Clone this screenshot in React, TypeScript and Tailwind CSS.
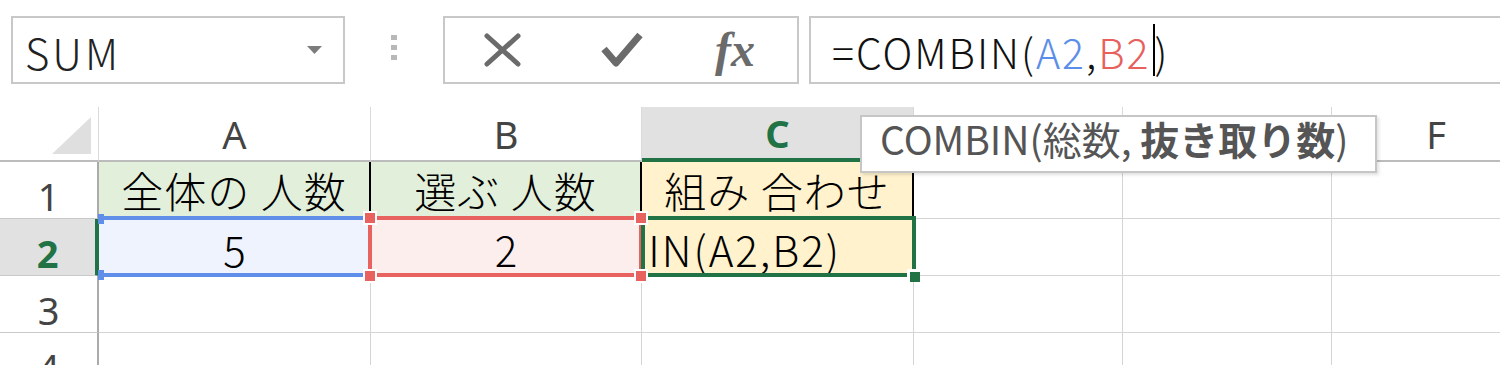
import type { ReactNode } from "react";

// Excel-style formula bar + grid, editing C2 with =COMBIN(A2,B2).

const JP = "font-['Noto_Sans_CJK_JP','Noto_Sans',sans-serif]";
const HDR = "font-['Noto_Sans','Liberation_Sans',sans-serif]";

function TopBar() {
  return (
    <div className={`flex h-[107px] items-start pt-[16px] ${JP}`}>
      <div className="ml-[11px] flex h-[68px] w-[334px] shrink-0 items-start justify-between border-2 border-[#c8c8c8] pl-[12px] pr-[21px] pt-[13px]">
        <span className="text-[42px] font-light leading-none tracking-[3px] text-[#222]">SUM</span>
        <svg width="15" height="8" viewBox="0 0 15 8" className="mt-[15px]">
          <path d="M0 0h15L7.5 8z" fill="#7c7c7c" />
        </svg>
      </div>
      <div className="ml-[46px] mt-[19px] flex w-[6px] shrink-0 flex-col gap-[5px]">
        <span className="h-[5px] w-[6px] bg-[#b8b8b8]" />
        <span className="h-[5px] w-[6px] bg-[#b8b8b8]" />
        <span className="h-[5px] w-[6px] bg-[#b8b8b8]" />
      </div>
      <div className="ml-[46px] flex h-[68px] w-[356px] shrink-0 items-center border-2 border-[#c8c8c8] pl-[39px]">
        <svg width="37" height="34" viewBox="0 0 37 34">
          <path d="M3 3L34 31M34 3L3 31" stroke="#6b6b6b" strokeWidth="5" strokeLinecap="round" />
        </svg>
        <svg width="42" height="38" viewBox="0 0 42 38" className="ml-[80px]">
          <path d="M3 18L15 32L39 4" stroke="#6b6b6b" strokeWidth="7" fill="none" strokeLinejoin="round" />
        </svg>
        <span className="ml-[72px] font-['Liberation_Serif',serif] text-[48px] font-bold italic leading-none text-[#6b6b6b]">
          fx
        </span>
      </div>
      <div className="ml-[10px] flex h-[68px] flex-1 items-start border-2 border-r-0 border-[#c8c8c8] pl-[21px] pt-[13px] text-[41px] font-light leading-none tracking-[2px] text-[#111]">
        <span>=COMBIN(</span>
        <span className="text-[#5b8ee8]">A2</span>
        <span>,</span>
        <span className="text-[#e85f5c]">B2</span>
        <span className="-mt-[7px] ml-[2px] h-[52px] w-[2px] bg-black" />
        <span>)</span>
      </div>
    </div>
  );
}

function ColHead({ label, active }: { label: string; active?: boolean }) {
  return (
    <div
      className={`flex items-center justify-center border-r border-r-[#d9d9d9] ${HDR} text-[38px] leading-none ${
        active
          ? "border-b-4 border-b-[#217346] bg-[#e1e1e1] font-bold text-[#217346]"
          : "border-b-2 border-b-[#bcbcbc] text-[#444]"
      }`}
    >
      {label}
    </div>
  );
}

function RowHead({ n, active }: { n: number; active?: boolean }) {
  return (
    <div
      className={`flex items-end justify-center border-b border-b-[#c9c9c9] pb-[3px] ${HDR} text-[38px] leading-none ${
        active
          ? "border-r-4 border-r-[#217346] bg-[#e1e1e1] font-bold text-[#217346]"
          : "border-r-2 border-r-[#ababab] text-[#444]"
      }`}
    >
      {n}
    </div>
  );
}

function Cell({ className = "", children }: { className?: string; children?: ReactNode }) {
  return (
    <div className={`relative flex items-end justify-center border-b border-r border-[#d4d4d4] ${className}`}>
      {children}
    </div>
  );
}

function Handle({ className }: { className: string }) {
  return <span className={`absolute z-20 h-[14px] w-[14px] border-2 border-white ${className}`} />;
}

function Sheet() {
  const heading = `${JP} text-[42px] font-light leading-none text-black`;
  return (
    <div className="grid w-[1541px] grid-cols-[99px_272px_271px_272px_209px_209px_209px] grid-rows-[55px_57px_57px_57px_57px]">
      <div className="flex items-end justify-end border-b-2 border-r border-b-[#bcbcbc] border-r-[#d9d9d9] pb-[6px] pr-[7px]">
        <svg width="39" height="37" viewBox="0 0 39 37">
          <path d="M39 0V37H0z" fill="#dfdfdf" />
        </svg>
      </div>
      <ColHead label="A" />
      <ColHead label="B" />
      <ColHead label="C" active />
      <ColHead label="D" />
      <ColHead label="E" />
      <ColHead label="F" />

      <RowHead n={1} />
      <Cell className={`!border-r-2 !border-r-black bg-[#e2efda] pb-[7px] ${heading}`}>
        <span className="tracking-[1px]">全体の 人数</span>
      </Cell>
      <Cell className={`!border-r-2 !border-r-black bg-[#e2efda] pb-[7px] ${heading}`}>
        <span className="tracking-[1px]">選ぶ 人数</span>
      </Cell>
      <Cell className={`!border-r-2 !border-r-black bg-[#fff2cc] pb-[7px] ${heading}`}>
        <span className="tracking-[1px]">組み 合わせ</span>
      </Cell>
      <Cell />
      <Cell />
      <Cell />

      <RowHead n={2} active />
      <Cell className={`bg-[#eef3fd] pb-[5px] ${heading}`}>
        <span className="absolute -bottom-[2px] -top-[3px] left-0 -right-[1px] border-y-4 border-[#5f8fe8]" />
        <Handle className="-left-[1px] -top-[5px] !h-[10px] !w-[6px] !border-0 bg-[#5f8fe8]" />
        <Handle className="-bottom-[5px] -left-[1px] !h-[10px] !w-[6px] !border-0 bg-[#5f8fe8]" />
        <span className="relative">5</span>
      </Cell>
      <Cell className={`bg-[#fdeeee] pb-[5px] ${heading}`}>
        <span className="absolute -bottom-[2px] -left-[3px] -right-[2px] -top-[3px] border-4 border-[#e8625f]" />
        <Handle className="-left-[8px] -top-[8px] bg-[#e8625f]" />
        <Handle className="-bottom-[8px] -left-[8px] bg-[#e8625f]" />
        <Handle className="-right-[7px] -top-[8px] bg-[#e8625f]" />
        <Handle className="-bottom-[8px] -right-[7px] bg-[#e8625f]" />
        <span className="relative">2</span>
      </Cell>
      <Cell className={`overflow-visible bg-[#fff2cc] ${heading}`}>
        <span className="absolute -bottom-[2px] -left-[1px] -right-[3px] -top-[3px] z-10 border-4 border-[#217346]" />
        <span className="absolute -bottom-[7px] -right-[7px] z-20 h-[13px] w-[13px] border-l-[3px] border-t-[3px] border-white bg-[#217346]" />
        <div className="absolute inset-0 flex items-end justify-end overflow-hidden pb-[5px] pr-[72px]">
          <span className="shrink-0 whitespace-nowrap tracking-[2px]">=COMBIN(A2,B2)</span>
        </div>
      </Cell>
      <Cell />
      <Cell />
      <Cell />

      <RowHead n={3} />
      <Cell />
      <Cell />
      <Cell />
      <Cell />
      <Cell />
      <Cell />

      <RowHead n={4} />
      <Cell />
      <Cell />
      <Cell />
      <Cell />
      <Cell />
      <Cell />
    </div>
  );
}

export default function App() {
  return (
    <div className="relative h-[365px] w-[1500px] overflow-hidden bg-white">
      <TopBar />
      <Sheet />
      <div
        className={`absolute left-[860px] top-[115px] z-30 flex h-[58px] w-[517px] items-start border-2 border-[#c6c6c6] bg-white pl-[18px] pt-[2px] shadow-[2px_2px_3px_rgba(0,0,0,0.12)] ${JP} text-[39px] leading-none text-[#555]`}
      >
        <span className="whitespace-pre">COMBIN(総数, </span>
        <span className="font-bold">抜き取り数</span>
        <span>)</span>
      </div>
    </div>
  );
}
